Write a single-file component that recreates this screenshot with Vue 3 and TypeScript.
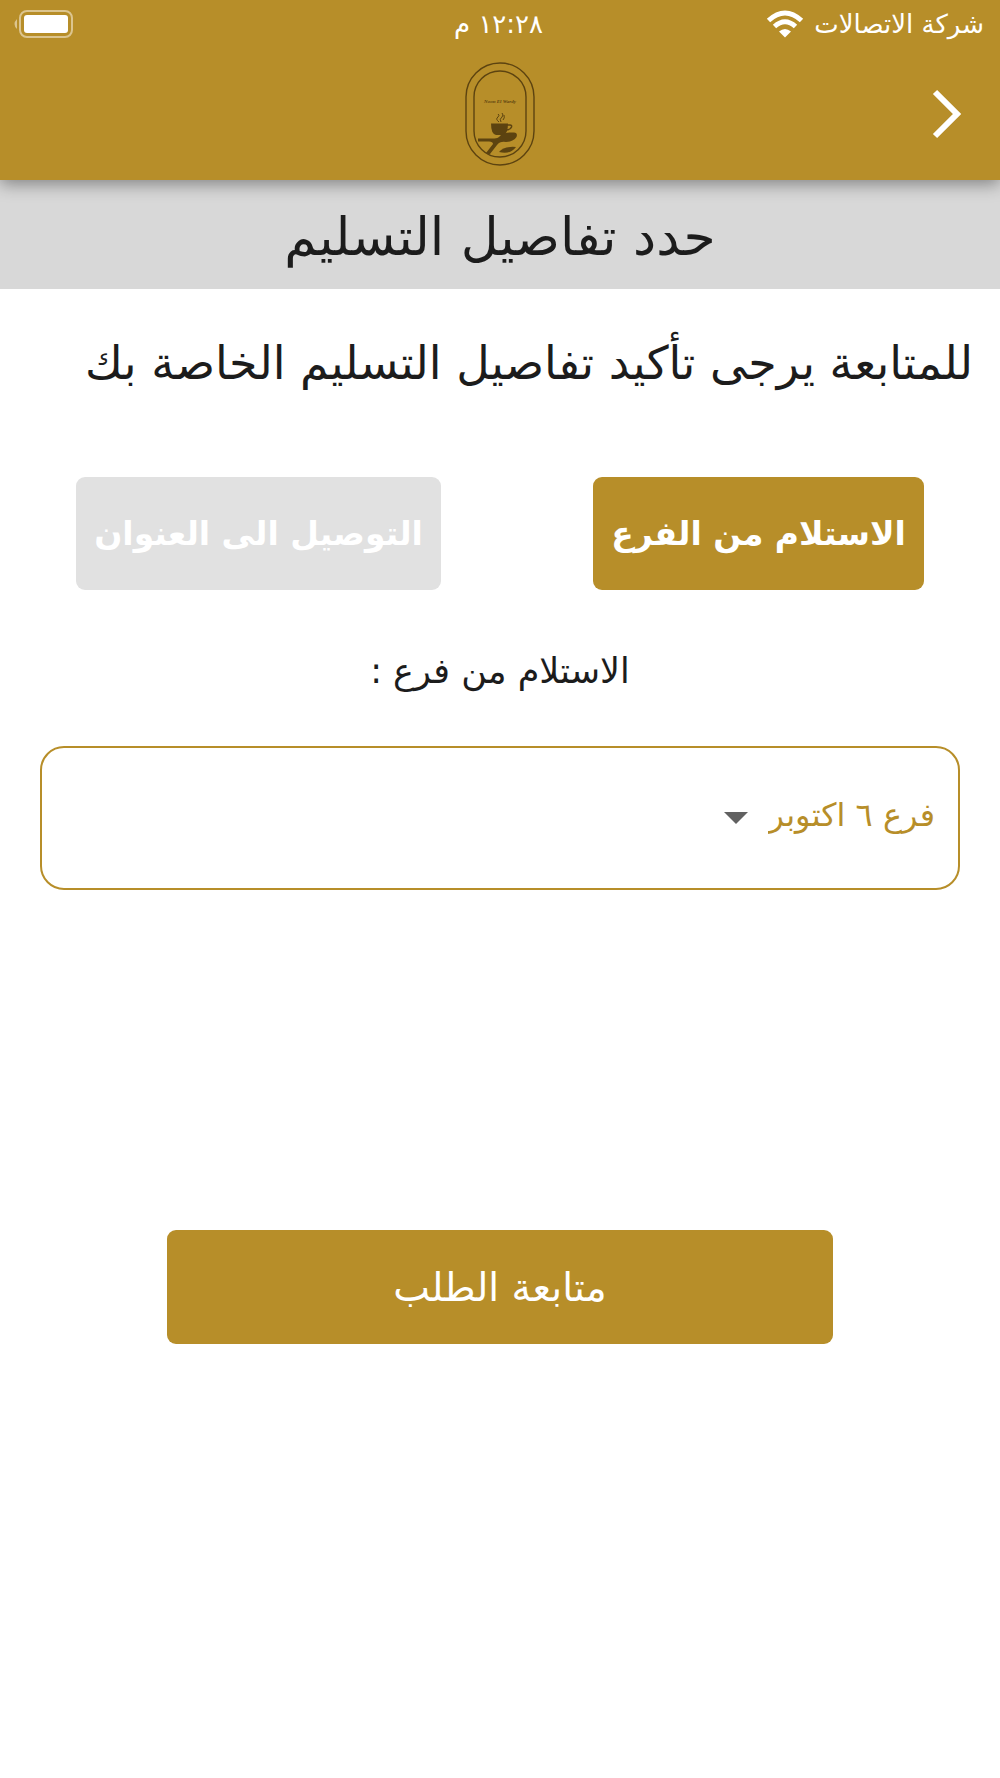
<script setup lang="ts">
import { ref } from 'vue'

type Method = 'pickup' | 'delivery'

const method = ref<Method>('pickup')
const branches = ['فرع ٦ اكتوبر']
const branch = ref(branches[0])
</script>

<template>
  <div class="screen" dir="rtl" lang="ar">
    <header class="top">
      <div class="status">
        <div class="carrier">
          <span>شركة الاتصالات</span>
          <svg width="38" height="28" viewBox="0 0 38 28" aria-hidden="true">
            <g fill="none" stroke="#fff" stroke-width="5">
              <path d="M2.500 10.500 Q19 -4.500 35.500 10.500" />
              <path d="M8.500 16.500 Q19 7 29.500 16.500" />
            </g>
            <path d="M13 21.500 Q19 16.500 25 21.500 L19 27.500 Z" fill="#fff" />
          </svg>
        </div>
        <time class="clock">١٢:٢٨ م</time>
        <div class="battery">
          <svg width="60" height="28" viewBox="0 0 60 28" role="img" aria-label="البطارية">
            <rect x="7" y="1" width="52" height="26" rx="7" fill="none" stroke="#dcc58f" stroke-width="2" />
            <rect x="11" y="5" width="44" height="18" rx="3" fill="#fff" />
            <path d="M4 9 Q-1 14 4 19 Z" fill="#dcc58f" />
          </svg>
        </div>
      </div>
      <div class="bar">
        <button class="back" type="button" aria-label="رجوع">
          <svg width="32" height="52" viewBox="0 0 32 52" aria-hidden="true">
            <path d="M3 4 L25 26 L3 48" fill="none" stroke="#fff" stroke-width="6" />
          </svg>
        </button>
        <svg class="logo" width="70" height="104" viewBox="0 0 70 104" role="img" aria-label="Noon El Wardy">
          <g fill="none" stroke="#5c4310">
            <rect x="1" y="1" width="68" height="102" rx="34" stroke-width="1.400" />
            <rect x="9" y="9" width="52" height="86" rx="26" stroke-width="1.400" />
            <path d="M42 63 h3 q2 0 1.500 2 q-1 3 -6 3" stroke-width="1.500" />
            <path d="M34 60 q-4 -3 -1 -5 q2 -2 0 -3 M36 60 q-2 -3 1 -5 q2 -2 0 -4 M38 58 q2 -2 1 -5" stroke-width="1" />
          </g>
          <text x="35" y="41" text-anchor="middle" class="logo-text" direction="ltr">Noon El Wardy</text>
          <g fill="#5c4310">
            <path d="M26 61.500 H43 Q43 72 38 73 H31 Q26 72 26 61.500 Z" />
            <path d="M13 76.500 H28 Q33 77 36 73 Q40 70 49 70.500 Q53 71 51.500 75 Q48 80 41 80 Q35 79 32 83 L25 92 Q22 93 21 91 L28 82 Q28 79.500 24 79.500 H13 Z" />
            <path d="M34 90 Q39 84 51 85 Q45 93 34 90 Z" />
          </g>
        </svg>
      </div>
    </header>

    <h1 class="title">حدد تفاصيل التسليم</h1>

    <main class="content">
      <p class="lead">للمتابعة يرجى تأكيد تفاصيل التسليم الخاصة بك</p>

      <div class="methods">
        <button type="button" class="method" :class="{ active: method === 'pickup' }" @click="method = 'pickup'">
          الاستلام من الفرع
        </button>
        <button type="button" class="method" :class="{ active: method === 'delivery' }" @click="method = 'delivery'">
          التوصيل الى العنوان
        </button>
      </div>

      <label class="label" for="branch">الاستلام من فرع :</label>
      <div class="field">
        <select id="branch" v-model="branch" class="select">
          <option v-for="b in branches" :key="b" :value="b">{{ b }}</option>
        </select>
        <svg class="caret" width="24" height="12" viewBox="0 0 24 12" aria-hidden="true">
          <path d="M0 0 H24 L12 12 Z" fill="#616161" />
        </svg>
      </div>

      <button type="button" class="submit">متابعة الطلب</button>
    </main>
  </div>
</template>

<style>
body {
  margin: 0;
  background: #fff;
}
</style>

<style scoped>
.screen {
  font-family: 'DejaVu Sans', sans-serif;
  color: #1c1c1c;
}

button,
select {
  margin: 0;
  border: 0;
  font-family: inherit;
}

.top {
  position: relative;
  background: #b78e29;
  color: #fff;
  box-shadow: 0 4px 16px rgba(0, 0, 0, 0.4);
}

.status {
  display: grid;
  grid-template-columns: 1fr auto 1fr;
  align-items: center;
  height: 48px;
  padding: 0 16px 0 13px;
  font-size: 26px;
  line-height: 48px;
}

.carrier {
  display: flex;
  align-items: center;
  gap: 10px;
}

.battery {
  display: flex;
  justify-content: flex-end;
}

.bar {
  display: grid;
  grid-template-columns: 1fr auto 1fr;
  align-items: center;
  height: 132px;
  padding: 0 36px;
}

.back {
  display: flex;
  justify-self: start;
  padding: 0;
  background: none;
}

.logo-text {
  font: italic bold 5px 'Liberation Serif', serif;
  fill: #5c4310;
}

.title {
  margin: 0;
  padding-top: 5px;
  background: #d8d8d8;
  font-size: 52px;
  font-weight: 400;
  line-height: 104px;
  text-align: center;
}

.content {
  display: flex;
  flex-direction: column;
}

.lead {
  margin: 34px 27px 0;
  font-size: 46px;
  line-height: 80px;
  white-space: nowrap;
}

.methods {
  display: flex;
  justify-content: space-around;
  margin-top: 74px;
}

.method {
  height: 113px;
  padding: 0 18px;
  border-radius: 9px;
  background: #e1e1e1;
  color: #fff;
  font-size: 33px;
  font-weight: 700;
}

.method.active {
  background: #b78e29;
}

.label {
  margin-top: 51px;
  font-size: 35px;
  line-height: 60px;
  text-align: center;
}

.field {
  display: flex;
  align-items: center;
  height: 140px;
  margin: 45px 40px 0;
  padding: 0 23px;
  border: 2px solid #b78e29;
  border-radius: 24px;
}

.select {
  appearance: none;
  padding: 0 0 6px;
  background: none;
  color: #b78e29;
  font-size: 32px;
  line-height: 60px;
}

.caret {
  margin-right: 20px;
}

.submit {
  align-self: center;
  width: 66.6%;
  height: 114px;
  margin-top: 340px;
  border-radius: 9px;
  background: #b78e29;
  color: #fff;
  font-size: 39px;
}
</style>
